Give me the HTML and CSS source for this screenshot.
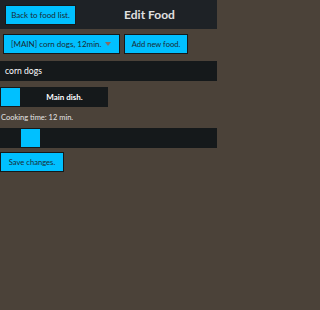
FILE: index.html
```html
<!DOCTYPE html>
<html>
<head>
<meta charset="utf-8">
<link rel="stylesheet" href="styles.css">
</head>
<body>
<div class="app">
  <header class="header">
    <button class="btn back">Back to food list.</button>
    <h1 class="title">Edit Food</h1>
  </header>
  <div class="row">
    <div class="btn select">
      <span class="select-text">[MAIN] corn dogs, 12min.</span>
      <span class="caret"></span>
    </div>
    <button class="btn add">Add new food.</button>
  </div>
  <div class="input">corn dogs</div>
  <div class="toggle">
    <span class="toggle-knob"></span>
    <span class="toggle-label">Main dish.</span>
  </div>
  <div class="caption">Cooking time: 12 min.</div>
  <div class="slider">
    <span class="slider-thumb"></span>
  </div>
  <div class="save-row">
    <button class="btn save">Save changes.</button>
  </div>
</div>
</body>
</html>
```
FILE: styles.css
```css
html, body {
  margin: 0;
  padding: 0;
  background: #4b4239;
}
.app {
  width: 217px;
  height: 310px;
  background: #4b4239;
  font-family: Lato, "Liberation Sans", sans-serif;
  font-size: 8px;
  color: #e6e6e6;
}
.header {
  height: 29px;
  background: #1e2226;
  display: flex;
  align-items: center;
  padding-left: 5px;
  box-sizing: border-box;
}
.btn {
  font-family: Lato, "Liberation Sans", sans-serif;
  font-size: 7.6px;
  color: #1a2a33;
  background: #00c0ff;
  border: 1px solid #15191a;
  height: 20px;
  box-sizing: border-box;
  padding: 0;
  margin: 0;
  display: flex;
  align-items: center;
  justify-content: center;
  white-space: nowrap;
}
.back {
  width: 71px;
  font-size: 8px;
}
.title {
  margin: 0;
  flex: 1;
  text-align: center;
  font-size: 12px;
  font-weight: bold;
  color: #e0e0e0;
  padding-left: 6px;
}
.row {
  display: flex;
  gap: 4px;
  padding: 5px 0 0 3px;
  height: 20px;
}
.select {
  width: 117px;
  justify-content: space-between;
  padding: 0 8px 0 7px;
  font-size: 8px;
}
.caret {
  width: 0;
  height: 0;
  border-left: 3px solid transparent;
  border-right: 3px solid transparent;
  border-top: 4px solid #8a6a62;
}
.add {
  width: 64px;
}
.input {
  margin-top: 7px;
  height: 20px;
  background: #15191b;
  display: flex;
  align-items: center;
  padding-left: 5px;
  color: #ffffff;
  font-size: 8.6px;
}
.toggle {
  margin-top: 6px;
  width: 108px;
  height: 20px;
  background: #15191b;
  display: flex;
  align-items: center;
}
.toggle-knob {
  width: 21px;
  height: 20px;
  background: #00c0ff;
  box-sizing: border-box;
  border: 1px solid #15191b;
}
.toggle-label {
  flex: 1;
  text-align: center;
  font-weight: bold;
  color: #ffffff;
}
.caption {
  margin-top: 5px;
  padding-left: 1px;
  height: 11px;
  line-height: 11px;
  font-size: 7.5px;
  color: #e6e6e6;
}
.slider {
  margin-top: 5px;
  height: 20px;
  background: #15191b;
  display: flex;
  padding-left: 20px;
}
.slider-thumb {
  width: 21px;
  height: 20px;
  background: #00c0ff;
  box-sizing: border-box;
  border: 1px solid #15191b;
}
.save-row {
  margin-top: 4px;
  display: flex;
}
.save {
  width: 64px;
}
```
